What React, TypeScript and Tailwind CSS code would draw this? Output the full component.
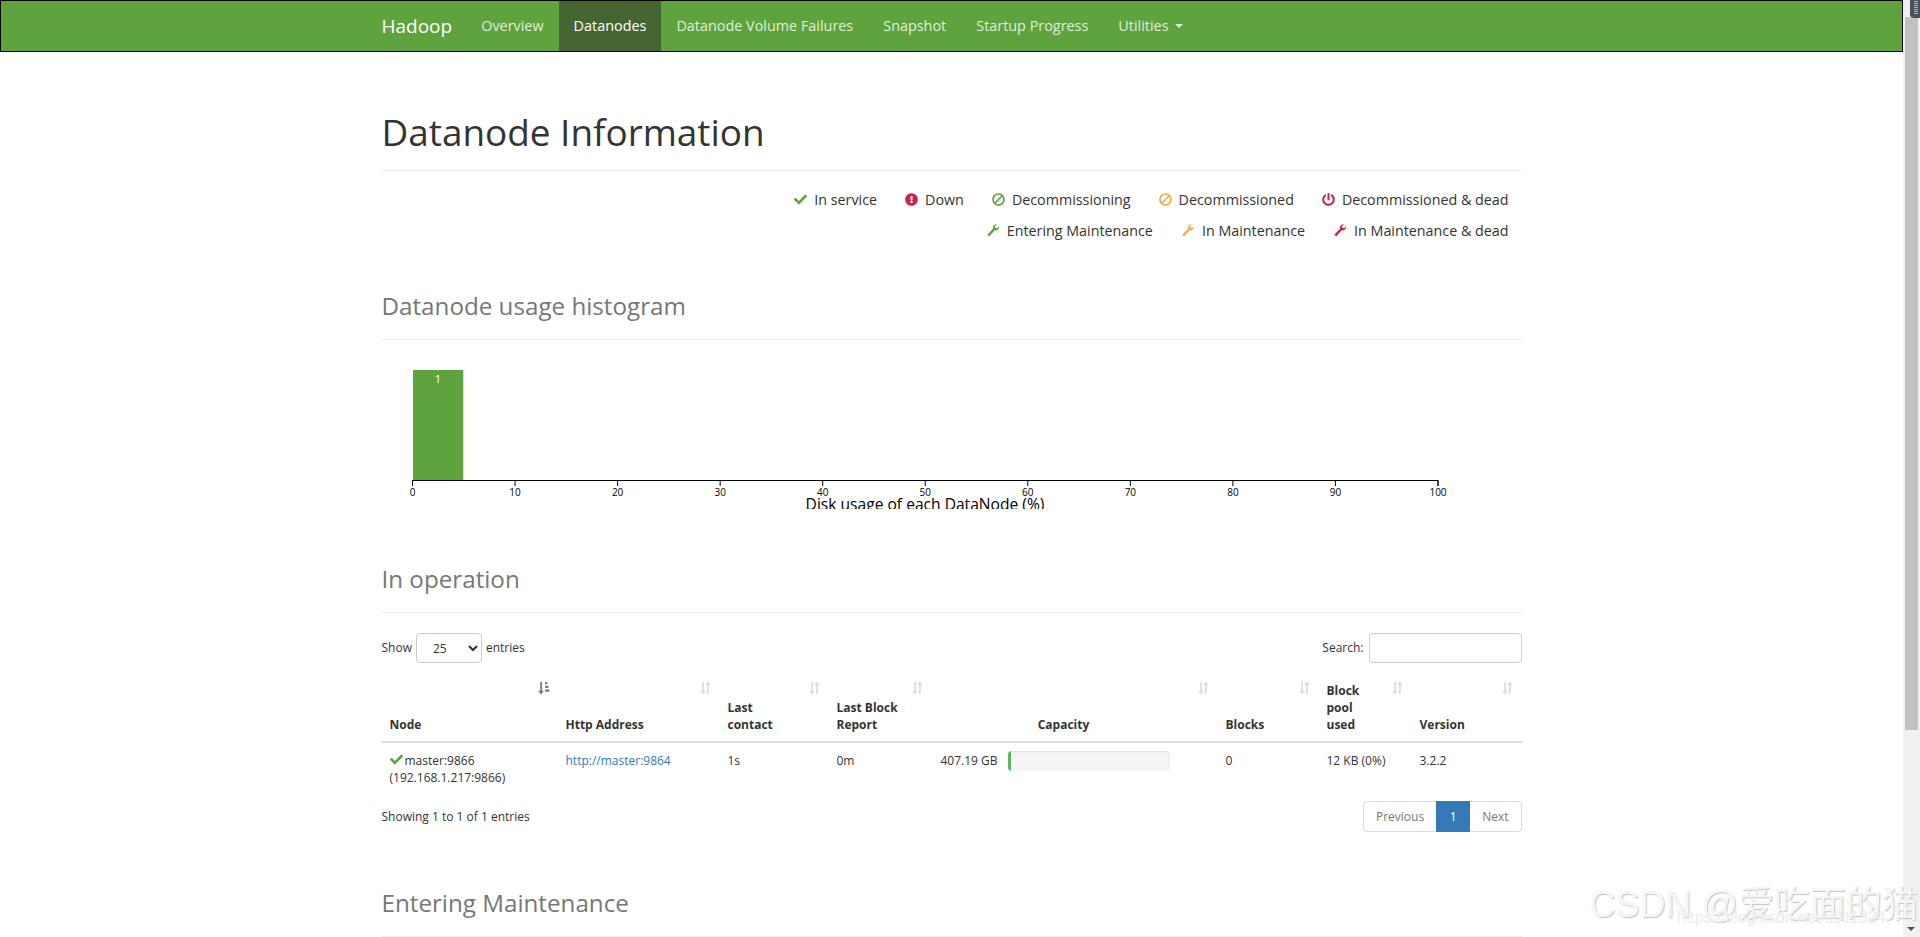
import { FaCheck, FaExclamationCircle, FaBan, FaPowerOff } from "react-icons/fa";

const navLinks = ["Overview", "Datanodes", "Datanode Volume Failures", "Snapshot", "Startup Progress"];

function SortIcon({ active = false }: { active?: boolean }) {
  const color = active ? "#777" : "#ddd";
  return (
    <svg width="13" height="14" viewBox="0 0 12 13" className="absolute right-2 top-[7px]">
      <path d="M3 1v8H1l2.7 3.5L6.4 9H4.6V1z" fill={color} />
      {active ? (
        <path d="M7.5 1h2v2h-2zM7.5 4.5h3v2h-3zM7.5 8h4v2h-4z" fill={color} />
      ) : (
        <path d="M9 12V4h2L8.3.5 5.6 4h1.8v8z" fill={color} />
      )}
    </svg>
  );
}

function Wrench({ className }: { className: string }) {
  return (
    <svg viewBox="0 0 16 16" width="14" height="14" className={className} fill="currentColor">
      <path d="M1.5 13.5 8.2 6.2C7.6 4 8.6 1.6 11.6 1h.8l-2.2 2.4.6 2 2 .6L15 3.6c.2 3-2 5.2-5 4.8l-6.4 7z" />
    </svg>
  );
}

function Legend({ icon, label }: { icon: React.ReactNode; label: string }) {
  return (
    <span className="ml-[28px] inline-flex items-center gap-[7px] [&>svg]:-translate-y-px">
      {icon}
      {label}
    </span>
  );
}

function SectionTitle({ title, className }: { title: string; className: string }) {
  return (
    <div className={`border-b border-[#eee] pb-[20px] ${className}`}>
      <h2 className="text-[24.2px] leading-[26px] text-[#777]">{title}</h2>
    </div>
  );
}

function Histogram() {
  const ticks = [0, 10, 20, 30, 40, 50, 60, 70, 80, 90, 100];
  return (
    <svg width="1140" height="169" className="block" fontFamily="'Open Sans', sans-serif">
      <rect x="31" y="30" width="50" height="110" fill="#5fa33e" />
      <rect x="81" y="30" width="1" height="110" fill="#cfe3c5" />
      <text x="56" y="43" fontSize="11" fill="#fff" textAnchor="middle">1</text>
      <path d="M30.5 146V140.5H1056V146" fill="none" stroke="#000" />
      {ticks.map((t) => {
        const x = 30.5 + t * 10.255;
        return (
          <g key={t}>
            <line x1={x} x2={x} y1="140" y2="146" stroke="#000" />
            <text x={x} y="156" fontSize="10" fill="#000" textAnchor="middle">{t}</text>
          </g>
        );
      })}
      <text x="543" y="170" fontSize="15.6" fill="#000" textAnchor="middle">Disk usage of each DataNode (%)</text>
    </svg>
  );
}

const headers = [
  { label: "Node", width: "w-[176px]", active: true },
  { label: "Http Address", width: "w-[162px]" },
  { label: "Last contact", width: "w-[109px]" },
  { label: "Last Block Report", width: "w-[103px]" },
  { label: "Capacity", width: "w-[286px]", center: true },
  { label: "Blocks", width: "w-[101px]" },
  { label: "Block pool used", width: "w-[93px]" },
  { label: "Version", width: "w-[110px]" },
];

function DatanodeTable() {
  return (
    <table className="w-[1140px] table-fixed border-collapse text-[12px] leading-[17px]">
      <thead>
        <tr className="border-b-2 border-[#ddd]">
          {headers.map((h) => (
            <th
              key={h.label}
              className={`relative p-2 pr-[30px] align-bottom font-bold ${h.width} ${h.center ? "text-center" : "text-left"}`}
            >
              {h.label}
              <SortIcon active={h.active} />
            </th>
          ))}
        </tr>
      </thead>
      <tbody>
        <tr>
          <td className="px-2 pt-[9px] pb-2 align-top">
            <FaCheck className="mr-[2px] inline align-[-1px] text-[13px] text-[#5fa33e]" />
            master:9866
            <br />
            (192.168.1.217:9866)
          </td>
          <td className="px-2 pt-[9px] pb-2 align-top text-[#337ab7]">http://master:9864</td>
          <td className="px-2 pt-[9px] pb-2 align-top">1s</td>
          <td className="px-2 pt-[9px] pb-2 align-top">0m</td>
          <td className="px-2 pt-[9px] pb-2 align-top">
            <div className="flex items-start">
              <span className="w-[58px] text-right whitespace-nowrap">407.19 GB</span>
              <div className="ml-[10px] mt-[-1px] h-[20px] w-[162px] overflow-hidden rounded bg-[#f5f5f5] shadow-[inset_0_1px_2px_rgba(0,0,0,0.1)]">
                <div className="h-full w-[3px] bg-[#5cb85c]" />
              </div>
            </div>
          </td>
          <td className="px-2 pt-[9px] pb-2 align-top">0</td>
          <td className="px-2 pt-[9px] pb-2 align-top">12 KB (0%)</td>
          <td className="px-2 pt-[9px] pb-2 align-top">3.2.2</td>
        </tr>
      </tbody>
    </table>
  );
}

export default function App() {
  return (
    <div className="relative flex h-[937px] overflow-hidden bg-white font-['Open_Sans',sans-serif] text-[14px] text-[#333]">
      <div className="min-w-0 flex-1">
        <nav className="h-[52px] border border-black bg-[#5fa33e]">
          <div className="mx-auto flex h-full w-[1140px] items-stretch text-[14.4px]">
            <span className="flex items-center pr-[14px] text-[19px] text-white">Hadoop</span>
            {navLinks.map((link) => (
              <span
                key={link}
                className={
                  link === "Datanodes"
                    ? "flex items-center bg-[#456632] px-[15px] text-white"
                    : "flex items-center px-[15px] text-[#dff0d8]"
                }
              >
                {link}
              </span>
            ))}
            <span className="flex items-center px-[15px] text-[#dff0d8]">
              Utilities
              <span className="ml-[6px] h-0 w-0 border-x-4 border-t-4 border-x-transparent border-t-[#dff0d8]" />
            </span>
          </div>
        </nav>

        <main className="mx-auto w-[1140px]">
          <div className="mt-[60px] border-b border-[#eee] pb-[18px]">
            <h1 className="text-[36.9px] leading-[40px] text-[#333]">Datanode Information</h1>
          </div>

          <div className="mt-[19px] flex justify-end pr-[13px] text-[14.3px] leading-[20px]">
            <Legend icon={<FaCheck className="text-[13px] text-[#5fa33e]" />} label="In service" />
            <Legend icon={<FaExclamationCircle className="text-[13px] text-[#c7254e]" />} label="Down" />
            <Legend icon={<FaBan className="-scale-x-100 text-[13px] text-[#5fa33e]" />} label="Decommissioning" />
            <Legend icon={<FaBan className="-scale-x-100 text-[13px] text-[#f0ad4e]" />} label="Decommissioned" />
            <Legend icon={<FaPowerOff className="text-[13px] text-[#c7254e]" />} label="Decommissioned & dead" />
          </div>
          <div className="mt-[11px] flex justify-end pr-[13px] text-[14.3px] leading-[20px]">
            <Legend icon={<Wrench className="text-[#5fa33e]" />} label="Entering Maintenance" />
            <Legend icon={<Wrench className="text-[#f0ad4e]" />} label="In Maintenance" />
            <Legend icon={<Wrench className="text-[#c7254e]" />} label="In Maintenance & dead" />
          </div>

          <SectionTitle title="Datanode usage histogram" className="mt-[52px]" />
          <Histogram />

          <SectionTitle title="In operation" className="mt-[57px]" />

          <div className="mt-[20px] flex items-center justify-between text-[12px]">
            <div className="flex items-center">
              Show
              <select className="mx-[4px] h-[30px] w-[66px] rounded border border-[#ccc] bg-white px-[12px] text-[12px]" defaultValue="25">
                <option>25</option>
              </select>
              entries
            </div>
            <div className="flex items-center">
              Search:
              <input className="ml-[5px] h-[30px] w-[153px] rounded border border-[#ccc]" />
            </div>
          </div>

          <div className="mt-[11px]">
            <DatanodeTable />
          </div>

          <div className="mt-[7px] flex items-start justify-between text-[12px]">
            <span className="pt-[7px]">Showing 1 to 1 of 1 entries</span>
            <div className="flex h-[31px] items-stretch">
              <span className="flex items-center rounded-l border border-r-0 border-[#ddd] px-[12px] text-[#777]">Previous</span>
              <span className="flex w-[34px] items-center justify-center bg-[#337ab7] text-white">1</span>
              <span className="flex items-center rounded-r border border-l-0 border-[#ddd] px-[12px] text-[#777]">Next</span>
            </div>
          </div>

          <SectionTitle title="Entering Maintenance" className="mt-[58px]" />
        </main>
      </div>

      {/* browser scrollbar */}
      <div className="flex w-[17px] shrink-0 flex-col bg-[#f1f1f1] pt-[17px]">
        <div className="mx-[2px] h-[713px] bg-[#c1c1c1]" />
        <div className="mt-auto mb-[6px] ml-[4px] h-0 w-0 border-x-[4px] border-t-[4px] border-x-transparent border-t-[#505050]" />
      </div>

      {/* tray widget over the scrollbar corner */}
      <div className="absolute right-0 top-0 flex h-[18px] w-[10px] flex-col gap-[1px] rounded-bl bg-[#4a5058] pl-[4px] pr-[2px] pt-[1px]">
        <div className="h-[1px] w-[4px] bg-[#4fe3c0]" />
        <div className="h-[1px] w-[4px] bg-[#4fe3c0]" />
        <div className="h-[1px] w-[4px] bg-[#4fe3c0]" />
        <div className="h-[1px] w-[4px] bg-[#4fe3c0]" />
        <div className="h-[1px] w-[4px] bg-[#4fe3c0]" />
        <div className="h-[1px] w-[4px] bg-[#4fe3c0]" />
        <div className="h-[1px] w-[4px] bg-[#4fe3c0]" />
      </div>

      {/* image watermark */}
      <div className="absolute right-[2px] top-[885px] font-['Liberation_Sans','Noto_Sans_CJK_SC',sans-serif] text-[36px] leading-[40px] text-[#f6f6f6] [text-shadow:1px_1px_1px_#c4c4c4]">
        CSDN @爱吃面的猫
      </div>
      <div className="absolute left-[1677px] top-[908px] font-['Liberation_Sans',sans-serif] text-[16px] leading-[20px] text-[#ececec]">
        https://blog.csdn.net/u011324
      </div>
    </div>
  );
}
